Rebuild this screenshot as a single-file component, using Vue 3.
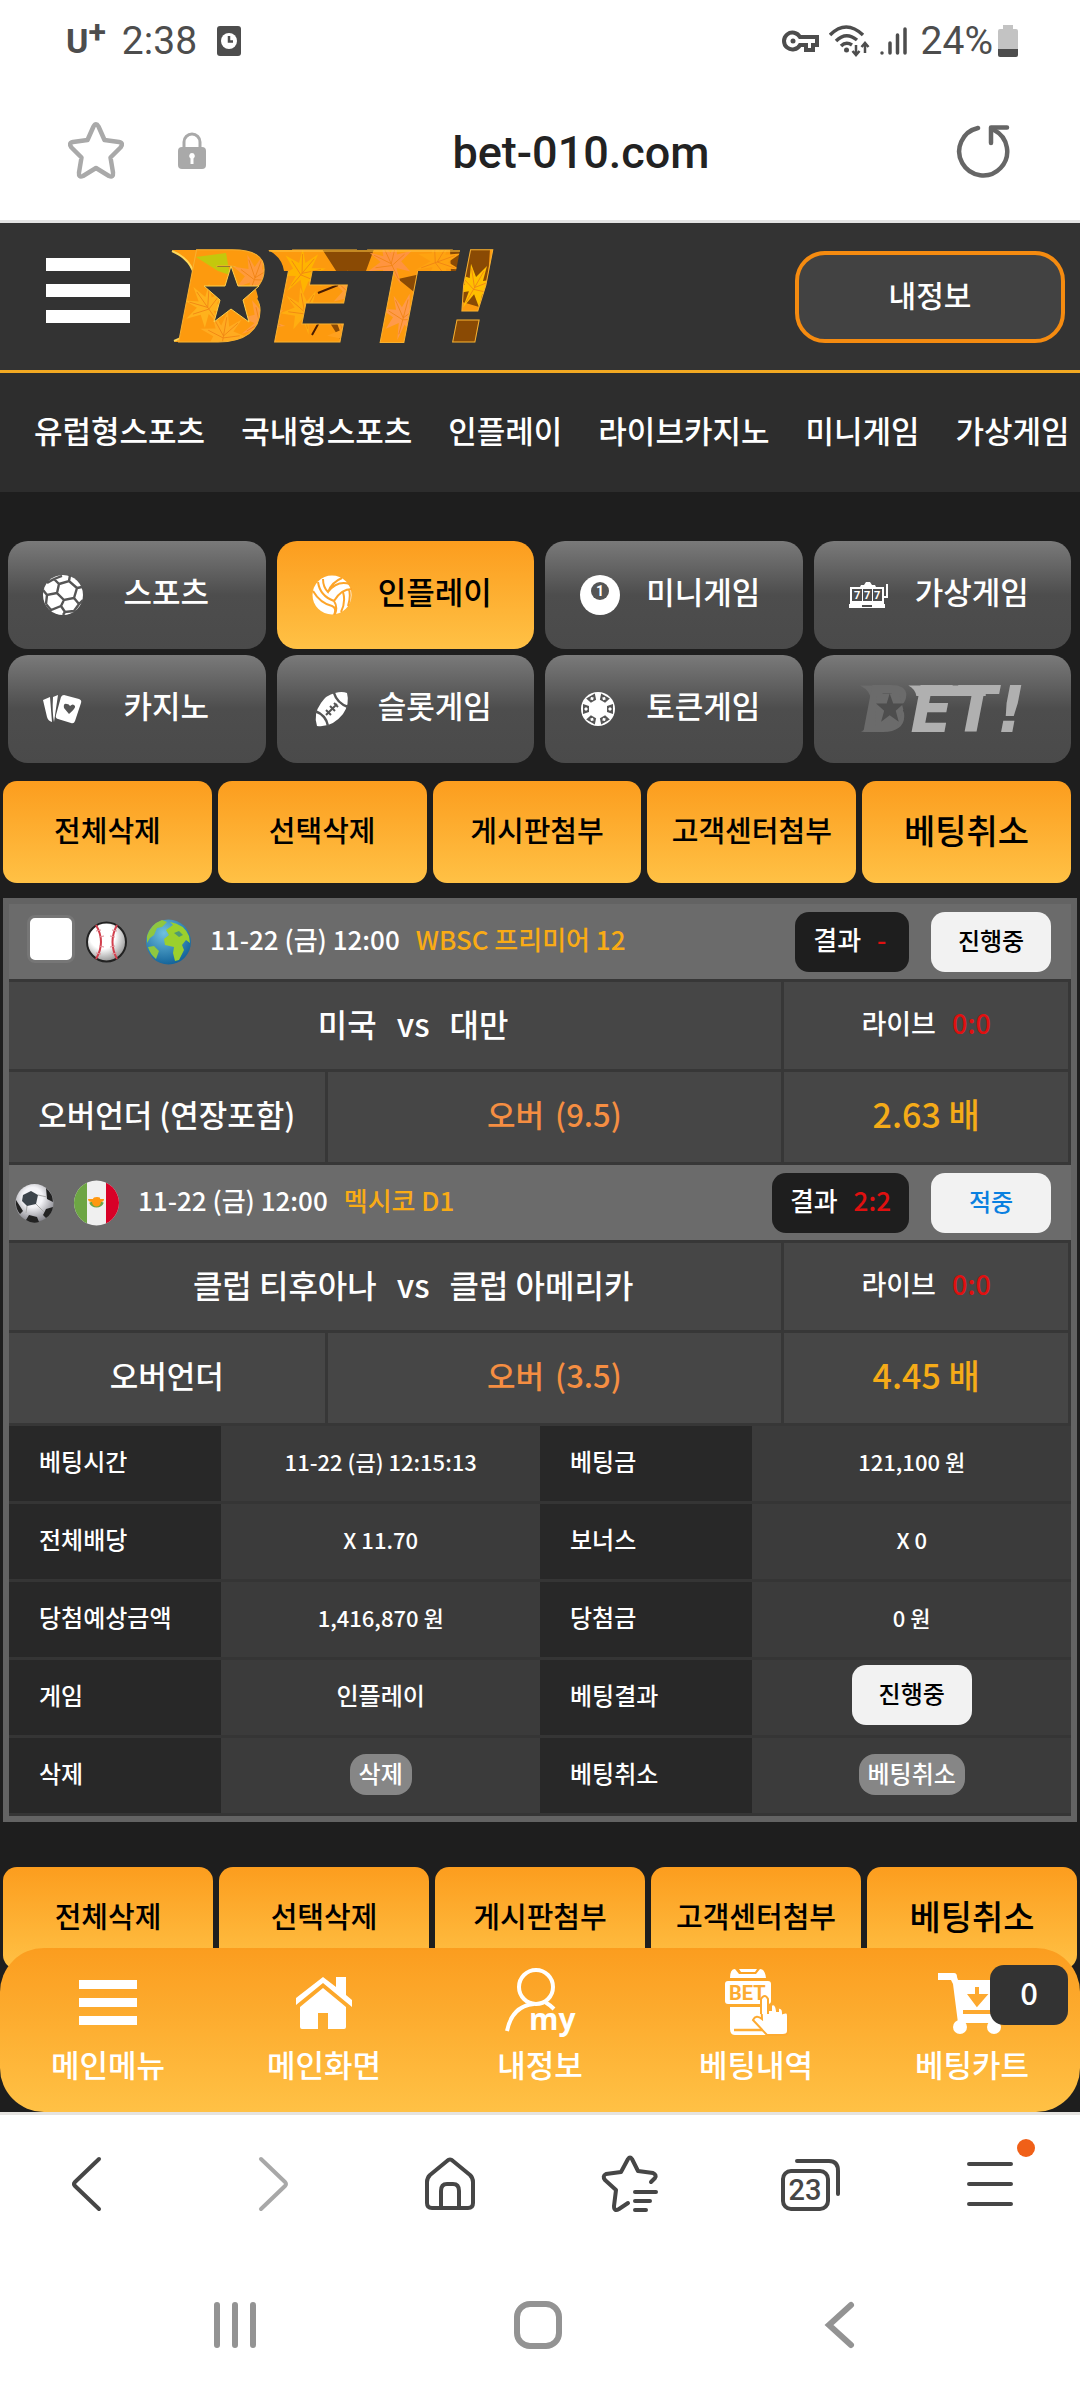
<template>
  <div class="screen">
    <div class="status-bar">
      <span class="carrier">U<sup>+</sup></span>
      <span class="clock">2:38</span>
      <svg class="status-alarm" width="24" height="30" viewBox="0 0 24 30">
        <rect width="24" height="30" rx="3" fill="#4d4d4d" />
        <circle cx="12" cy="15" r="8" fill="#fff" />
        <path d="M12 10v5.500h4" fill="none" stroke="#4d4d4d" stroke-width="2.500" />
      </svg>
      <div class="status-right">
        <svg width="38" height="24" viewBox="0 0 38 24" fill="none" stroke="#4d4d4d" stroke-width="4">
          <path d="M18 8A8.500 8.500 0 1 0 18 16H24V21H31V16H35V8Z" />
          <circle cx="11" cy="12" r="2.500" fill="#4d4d4d" stroke="none" />
        </svg>
        <svg width="42" height="32" viewBox="0 0 42 32" fill="none" stroke="#4d4d4d" stroke-width="3.500">
          <path d="M1 10Q17-6 34 10M7 16Q17 6 28 15M12 21Q17 16 23 20" />
          <circle cx="17.500" cy="25" r="2.500" fill="#4d4d4d" stroke="none" />
          <path d="M27 20v10M23.500 26l3.500 4 3.500-4M36 28V18M32.500 22l3.500-4 3.500 4" stroke-width="2.500" />
        </svg>
        <svg width="28" height="30" viewBox="0 0 28 30" stroke="#4d4d4d" stroke-width="3.500" stroke-linecap="round">
          <path d="M2 27v0M10 27V17M17.500 27V9M25 27V3" />
        </svg>
        <span class="percent">24%</span>
        <svg class="battery" width="20" height="32" viewBox="0 0 20 32">
          <path d="M5 0h10v4h3q2 0 2 2v19H0V6q0-2 2-2h3z" fill="#c3c3c3" />
          <path d="M0 24h20v6q0 2-2 2H2q-2 0-2-2z" fill="#4d4d4d" />
        </svg>
      </div>
    </div>

    <div class="url-bar">
      <button class="plain" aria-label="북마크">
        <svg width="60" height="58" viewBox="0 0 60 58" fill="none" stroke="#a9a9a9" stroke-width="4.500" stroke-linejoin="round">
          <path d="M27.500 4.500Q30 0 32.500 4.500L38.500 18L53 20Q58 21 54.500 25.500L44.500 35.500L47 50.500Q47.500 56 43 54L30 46L17 54Q12.500 56 13 50.500L15.500 35.500L5.500 25.500Q2 21 7 20L21.500 18Z" />
        </svg>
      </button>
      <svg class="lock" width="28" height="38" viewBox="0 0 28 38">
        <path d="M6 16V10a8 8 0 0 1 16 0v6" fill="none" stroke="#a9a9a9" stroke-width="3" />
        <rect y="15" width="28" height="22" rx="4" fill="#a9a9a9" />
        <path d="M14 21a3 3 0 0 1 1.500 5.500V32h-3v-5.500A3 3 0 0 1 14 21" fill="#fff" />
      </svg>
      <span class="address">bet-010.com</span>
      <button class="plain" aria-label="새로고침">
        <svg width="56" height="56" viewBox="0 0 56 56" fill="none" stroke="#666" stroke-width="4.500" stroke-linecap="round">
          <path d="M22 5A24 24 0 1 0 38 7" />
          <path d="M35 20V4.500H51" stroke-linejoin="round" />
        </svg>
      </button>
    </div>

    <div class="site">
      <header class="site-header">
        <button class="plain burger" aria-label="메뉴"><i></i><i></i><i></i></button>
        <a href="#" class="logo" aria-label="BET!">
          <svg viewBox="0 -4 330 96">
            <defs>
              <pattern id="leaves" y="-4" width="340" height="100" patternUnits="userSpaceOnUse">
                <rect width="340" height="100" fill="#fd9a0e" />
                <path d="M150 0h52l-8 22-26 6zM226 30l36-8-4 34zM278 0h40l-4 60-34-10zM268 68h50v32h-50zM158 74l34-8v20l-24 4z" fill="#8a4a04" />
                <path d="M24 8l30-4 4 22-12-4z" fill="#c4c80c" />
                <g v-for="leaf in leaves" :key="leaf.id" :transform="leaf.at">
                  <path
                    d="M0-22L4-7L15-16L9-3L24 0L10 5L14 18L3 9L0 26L-3 9L-14 18L-10 5L-24 0L-9-3L-15-16L-4-7Z"
                    :fill="leaf.color"
                  />
                  <path d="M0-16V20M-12-12L0 3L12-12M-16 0L0 5L16 0" fill="none" stroke="#f08312" stroke-width=".8" />
                </g>
                <path d="M80 88l14-12M140 86l10-18M146 44l20-8M178 40l22-3" stroke="#4a1c00" stroke-width="2" />
              </pattern>
            </defs>
            <path d="M0-3H34V89H2Q22 80 22 62V28Q22 8 0-3Z" fill="url(#leaves)" />
            <path d="M0-2Q23 8 23 30V60Q23 80 2 88" fill="none" stroke="#ffd85a" stroke-width="2" />
            <text class="wordmark" x="4" y="89" fill="url(#leaves)" stroke="#f8b030">BET!</text>
            <path d="M34 14H78L86 44L74 76H30Z" fill="url(#leaves)" />
            <path d="M96-3H288L284 18H112Q110 4 96-3Z" fill="url(#leaves)" />
            <path d="M97-2H288" stroke="#ffc843" />
            <path d="M59 13L66 33H87L71 47L77 69L59 56L42 69L48 47L32 33H53Z" fill="#333" stroke="#ffd04a" />
          </svg>
        </a>
        <button class="my-info">내정보</button>
      </header>

      <nav class="top-nav">
        <a v-for="item in topNav" :key="item" href="#">{{ item }}</a>
      </nav>

      <main>
        <div class="game-grid">
          <a
            v-for="game in games"
            :key="game.id"
            href="#"
            class="game"
            :class="{ active: game.active }"
          >
            <svg v-if="game.id === 'soccer'" class="game-icon" viewBox="0 0 40 40">
              <circle cx="20" cy="20" r="20" fill="#fff" />
              <path
                d="M16 9L26 6L34 13L31 23L21 25L14 18ZM16 9L11 4M26 6L27 0M34 13L39 12M31 23L36 29M21 25L18 31M14 18L4 20L0 15M4 20L3 29M18 31L8 35L3 29M18 31L22 37L31 36L36 29L40 25M22 37L20 40M11 4L4 8M11 4L19 1"
                fill="none" stroke="#555" stroke-width="2.400"
              />
            </svg>
            <svg v-else-if="game.id === 'volley'" class="game-icon" viewBox="0 0 40 40">
              <circle cx="20" cy="20" r="19.500" fill="#fff" />
              <path
                d="M6 7Q8 21 22 26Q29 14 40 14M1 16Q8 28 20 31Q25 33 22 40M22 26Q26 32 23 39M16 17Q25 5 38 9M11 4Q11 12 16 17Q20 7 30 3M31 17Q34 27 29 37M37 14Q39 22 36 31"
                fill="none" stroke="#fda52a" stroke-width="2"
              />
            </svg>
            <svg v-else-if="game.id === 'mini'" class="game-icon" viewBox="0 0 40 40">
              <circle cx="20" cy="20" r="20" fill="#fff" />
              <circle cx="20" cy="16" r="9" fill="#555" />
              <text x="20" y="21" class="ball-no" text-anchor="middle">1</text>
            </svg>
            <svg v-else-if="game.id === 'virtual'" class="game-icon" viewBox="0 0 40 40">
              <path d="M12 10h3l2-3h4l2 3h3l1 2h8v17h1v4H0v-4h1V12h10z" fill="#fff" />
              <path d="M3 14h10v12H3zM14 14h9v12h-9zM24 14h9v12h-9zM13 30h10v2H13z" fill="#4d4d4d" />
              <path d="M38 9v13h-3" fill="none" stroke="#fff" stroke-width="2" />
              <text x="5" y="24" class="slot-no">7</text>
              <text x="15" y="24" class="slot-no">7</text>
              <text x="25" y="24" class="slot-no">7</text>
            </svg>
            <svg v-else-if="game.id === 'casino'" class="game-icon" viewBox="0 0 40 40">
              <path d="M0 11L7 8L9 33Q5 32 4 28ZM10 8L15 6L11 33Q9 24 10 8Z" fill="#fff" />
              <path d="M21 6L36 10Q39 11 38 14L32 32Q31 35 28 34L15 30Q12 29 13 26L18 8Q19 6 21 6Z" fill="#fff" />
              <path d="M26 25L21 19Q20 14 24 15Q26 15 27 17Q30 14 32 17Q33 19 26 25Z" fill="#555" />
            </svg>
            <svg v-else-if="game.id === 'slot'" class="game-icon" viewBox="0 0 40 40">
              <path d="M23 4Q30 2 35 4Q38 15 31 25Q20 39 5 37Q1 25 9 14Q14 6 23 4Z" fill="#fff" />
              <path d="M22 4Q25 14 36 18M3 22Q14 26 16 37" fill="none" stroke="#555" stroke-width="2.500" />
              <path d="M14 26L25 15M14 21l5 5M18 17l5 5M22 14l4 4" stroke="#555" stroke-width="2" />
            </svg>
            <svg v-else-if="game.id === 'token'" class="game-icon" viewBox="0 0 40 40">
              <circle cx="18" cy="20" r="17" fill="#fff" />
              <g v-for="n in 6" :key="n" :transform="`rotate(${n * 60 - 30} 18 20)`">
                <path d="M13 5h10l-2 6h-6z" fill="#555" />
                <path d="M16 8l2-2 2 2-2 2z" fill="#fff" />
              </g>
            </svg>
            <svg v-else class="gray-logo" viewBox="0 -4 330 96">
              <path d="M0-3H34V89H2Q22 80 22 62V28Q22 8 0-3Z" fill="#6b6b6b" />
              <text class="wordmark" x="4" y="89" fill="#6b6b6b">B<tspan fill="#b0b0b0">ET!</tspan></text>
              <path d="M34 14H78L86 44L74 76H30Z" fill="#6b6b6b" />
              <path d="M96-3H250V18H112Q110 4 96-3Z" fill="#b0b0b0" />
              <path d="M59 13L66 33H87L71 47L77 69L59 56L42 69L48 47L32 33H53Z" fill="#4d4d4d" />
            </svg>
            <span v-if="game.label">{{ game.label }}</span>
          </a>
        </div>

        <div class="actions">
          <button v-for="action in actions" :key="action">{{ action }}</button>
        </div>

        <section class="bet">
          <template v-for="match in matches" :key="match.league">
            <div class="match-head">
              <input v-if="match.checkable" type="checkbox" aria-label="선택" />
              <svg v-if="match.sport === 'baseball'" width="41" height="42" viewBox="0 0 41 42">
                <defs>
                  <radialGradient id="baseball" cx=".4" cy=".35" r=".65">
                    <stop offset=".5" stop-color="#fff" />
                    <stop offset="1" stop-color="#999" />
                  </radialGradient>
                </defs>
                <circle cx="20.500" cy="21" r="19.500" fill="url(#baseball)" stroke="#222" stroke-width="2" />
                <path d="M10 4Q20 21 10 38M31 4Q22 21 31 38" fill="none" stroke="#d2404e" stroke-width="2" />
                <path d="M10 10l5-1M13 16l5-1M13 25l5 1M10 32l5 1M26 9l5 1M24 15l5 1M24 26l5-1M26 33l5-1" stroke="#e09098" />
              </svg>
              <svg v-else width="41" height="42" viewBox="0 0 41 42">
                <defs>
                  <radialGradient id="soccer" cx=".45" cy=".35" r=".65">
                    <stop offset=".4" stop-color="#f4f4f8" />
                    <stop offset="1" stop-color="#85858c" />
                  </radialGradient>
                </defs>
                <circle cx="20.500" cy="21" r="19" fill="url(#soccer)" />
                <path d="M9 13L17 9L24 13L22 22L13 24L8 19Z" fill="#3c444c" />
                <path d="M32 6Q39 12 39 20L33 17ZM2 18Q1 26 6 32L9 29ZM12 38L15 33L23 35L25 40Q18 42 12 38ZM32 27L39 25Q38 32 32 36L29 33Z" fill="#222" />
                <path d="M24 13L33 15M22 22L30 30M13 24L12 31" stroke="#aaa" />
              </svg>
              <svg v-if="match.region === 'world'" width="45" height="46" viewBox="0 0 45 46">
                <defs>
                  <radialGradient id="sea" cx=".4" cy=".3" r=".7">
                    <stop offset="0" stop-color="#6fc1e0" />
                    <stop offset="1" stop-color="#15659b" />
                  </radialGradient>
                </defs>
                <circle cx="22.500" cy="23" r="22.500" fill="url(#sea)" />
                <path d="M1 17Q5 5 16 1L21 3L16 8L11 9L8 16L4 19L1 24ZM2 28L8 27L13 32L10 40Q4 35 2 28Z" fill="#8fc740" />
                <path d="M20 11L27 6L24 3Q38 5 43 17L44 24L40 21L36 26L38 31L33 41L29 42L27 34L28 28L19 26L18 20L23 16Z" fill="#9bd02d" />
                <path d="M28 14l5-2 4 4-4 2z" fill="#4f9a72" />
              </svg>
              <svg v-else width="45" height="46" viewBox="0 0 45 46">
                <clipPath id="flag"><circle cx="22.500" cy="23" r="22.500" /></clipPath>
                <g clip-path="url(#flag)">
                  <rect width="45" height="46" fill="#f0f0f0" />
                  <rect width="13" height="46" fill="#6da544" />
                  <rect x="32" width="13" height="46" fill="#d80027" />
                </g>
                <path d="M17 22a6 6 0 0 0 11 0" fill="none" stroke="#6da544" stroke-width="4" />
                <path d="M14 19h5q0-2 4-2t3 2h4q0 3-3 3a4 4 0 0 1-9 0q-4 0-4-3z" fill="#ff9811" />
              </svg>
              <span class="kickoff">{{ match.time }}</span>
              <span class="league">{{ match.league }}</span>
              <span class="result">결과 <b>{{ match.result }}</b></span>
              <span class="state" :class="{ hit: match.hit }">{{ match.state }}</span>
            </div>
            <table class="match">
              <colgroup>
                <col class="col-type" />
                <col class="col-pick" />
                <col class="col-odds" />
              </colgroup>
              <tbody>
                <tr>
                  <td colspan="2" class="teams">
                    {{ match.home }}<span class="vs">vs</span>{{ match.away }}
                  </td>
                  <td class="live">라이브 <b>0:0</b></td>
                </tr>
                <tr>
                  <td>{{ match.type }}</td>
                  <td class="pick">오버 <span>{{ match.line }}</span></td>
                  <td class="odds">{{ match.odds }} 배</td>
                </tr>
              </tbody>
            </table>
          </template>

          <table class="detail">
            <tbody>
              <tr v-for="row in details" :key="row[0]">
                <th scope="row">{{ row[0] }}</th>
                <td>
                  <button v-if="row[0] === '삭제'" class="pill">{{ row[1] }}</button>
                  <span v-else :class="{ num: /\d/.test(row[1]) }">{{ row[1] }}</span>
                </td>
                <th scope="row">{{ row[2] }}</th>
                <td>
                  <button v-if="row[2] === '베팅취소'" class="pill">{{ row[3] }}</button>
                  <span v-else-if="row[2] === '베팅결과'" class="state">{{ row[3] }}</span>
                  <span v-else class="num">{{ row[3] }}</span>
                </td>
              </tr>
            </tbody>
          </table>
        </section>

        <div class="actions actions-bottom">
          <button v-for="action in actions" :key="action">{{ action }}</button>
        </div>
      </main>

      <nav class="tab-bar">
        <a href="#">
          <svg width="58" height="70" viewBox="0 0 58 70" fill="#fff">
            <path d="M0 12h58v9H0zM0 30h58v9H0zM0 48h58v9H0z" />
          </svg>
          메인메뉴
        </a>
        <a href="#">
          <svg width="56" height="70" viewBox="0 0 56 70" fill="#fff">
            <path d="M0 30L27 9L40 19V9H50V27L56 32V39L27 15L0 37Z" />
            <path d="M27 20L50 39V59Q50 61 48 61H32V45H22V61H6Q4 61 4 59V39Z" />
          </svg>
          메인화면
        </a>
        <a href="#">
          <svg width="72" height="70" viewBox="0 0 72 70" fill="none" stroke="#fff" stroke-width="4">
            <circle cx="32" cy="19" r="17" />
            <path d="M3 63Q8 38 30 36M41 34Q46 37 50 41" />
            <text x="25" y="62" class="my-text">my</text>
          </svg>
          내정보
        </a>
        <a href="#">
          <svg width="66" height="70" viewBox="0 0 66 70">
            <path d="M7 10Q7 1 12 1L16 6H33L37 1Q42 1 43 10ZM16 1h18l-2 3H18z" fill="#fff" />
            <path d="M7 39h36v28H12q-5 0-5-6z" fill="#fff" />
            <path d="M11 62h28" stroke="#fdad34" stroke-width="2.500" />
            <path d="M38 29Q41 24 45 30V42H48V37Q53 34 54 43H55V40Q60 39 60 45Q65 43 65 48V63Q65 67 60 67H44L30 52Q33 46 39 51Z" fill="#fff" stroke="#fdaa30" stroke-width="2" />
            <rect x="2" y="13" width="46" height="23" rx="3" fill="#fff" />
            <text x="6" y="32" class="bet-text">BET</text>
            <path d="M38 46V31Q42 25 45 31V46" fill="#fff" stroke="#fdaa30" stroke-width="2" />
          </svg>
          베팅내역
        </a>
        <a href="#">
          <svg width="68" height="70" viewBox="0 0 68 70">
            <path d="M0 5H16Q19 5 19 9L20 12H66L58 53H62V55H20L15 16L13 12H0Z" fill="#fff" />
            <circle cx="22" cy="59" r="7" fill="#fff" />
            <circle cx="56" cy="59" r="7" fill="#fff" />
            <path d="M39 19v10M25 44h38M33 28h13l-7 8z" stroke="#fda92f" stroke-width="4" fill="#fda92f" />
            <path d="M30 59h18" stroke="#fdae37" stroke-width="3" />
          </svg>
          베팅카트
          <span class="cart-count">0</span>
        </a>
      </nav>
    </div>

    <div class="browser-nav">
      <button class="plain" aria-label="뒤로">
        <svg width="60" height="60" viewBox="0 0 60 60"><path d="M39 5L15 28Q13 30 15 32L39 55" /></svg>
      </button>
      <button class="plain dim" aria-label="앞으로">
        <svg width="60" height="60" viewBox="0 0 60 60"><path d="M21 5L45 28Q47 30 45 32L21 55" /></svg>
      </button>
      <button class="plain" aria-label="홈">
        <svg width="60" height="60" viewBox="0 0 60 60">
          <path d="M27 7Q30 4 33 7L50 21Q53 24 53 28V49Q53 54 48 54H12Q7 54 7 49V28Q7 24 10 21Z" />
          <path d="M21 54V37Q21 30 27 30H33Q39 30 39 37V54" />
        </svg>
      </button>
      <button class="plain" aria-label="북마크 목록">
        <svg width="60" height="60" viewBox="0 0 60 60">
          <path d="M51 28L55 24Q57 21 53 19L38 17L32 5Q30 2 28 5L21 18L6 20Q2 22 5 26L16 36L14 52Q14 58 19 55L28 49" />
          <path d="M35 38H56M35 47H50M35 56H46" />
        </svg>
      </button>
      <button class="plain" aria-label="탭">
        <svg width="60" height="60" viewBox="0 0 60 60">
          <path d="M17 7H49Q58 7 58 17V40" />
          <rect x="3" y="17" width="45" height="38" rx="8" />
          <text x="25" y="46" class="tab-no" text-anchor="middle">23</text>
        </svg>
      </button>
      <button class="plain more" aria-label="더보기">
        <svg width="60" height="60" viewBox="0 0 60 60"><path d="M9 10H51M9 30H51M9 50H51" /></svg>
        <i class="dot"></i>
      </button>
    </div>

    <div class="system-nav">
      <button class="plain" aria-label="최근 앱">
        <svg width="50" height="50" viewBox="0 0 50 50"><path d="M7 5V45M25 5V45M43 5V45" /></svg>
      </button>
      <button class="plain" aria-label="홈 화면">
        <svg width="50" height="50" viewBox="0 0 50 50"><rect x="4" y="4" width="42" height="42" rx="13" /></svg>
      </button>
      <button class="plain" aria-label="이전">
        <svg width="50" height="50" viewBox="0 0 50 50"><path d="M35 5L13 25L35 45" /></svg>
      </button>
    </div>
  </div>
</template>

<script setup>
const topNav = ['유럽형스포츠', '국내형스포츠', '인플레이', '라이브카지노', '미니게임', '가상게임']

const games = [
  { id: 'soccer', label: '스포츠' },
  { id: 'volley', label: '인플레이', active: true },
  { id: 'mini', label: '미니게임' },
  { id: 'virtual', label: '가상게임' },
  { id: 'casino', label: '카지노' },
  { id: 'slot', label: '슬롯게임' },
  { id: 'token', label: '토큰게임' },
  { id: 'brand' }
]

const actions = ['전체삭제', '선택삭제', '게시판첨부', '고객센터첨부', '베팅취소']

const matches = [
  {
    checkable: true,
    sport: 'baseball',
    region: 'world',
    time: '11-22 (금) 12:00',
    league: 'WBSC 프리미어 12',
    result: '-',
    state: '진행중',
    home: '미국',
    away: '대만',
    type: '오버언더 (연장포함)',
    line: '(9.5)',
    odds: '2.63'
  },
  {
    sport: 'soccer',
    region: 'mexico',
    time: '11-22 (금) 12:00',
    league: '멕시코 D1',
    result: '2:2',
    state: '적중',
    hit: true,
    home: '클럽 티후아나',
    away: '클럽 아메리카',
    type: '오버언더',
    line: '(3.5)',
    odds: '4.45'
  }
]

const details = [
  ['베팅시간', '11-22 (금) 12:15:13', '베팅금', '121,100 원'],
  ['전체배당', 'X 11.70', '보너스', 'X 0'],
  ['당첨예상금액', '1,416,870 원', '당첨금', '0 원'],
  ['게임', '인플레이', '베팅결과', '진행중'],
  ['삭제', '삭제', '베팅취소', '베팅취소']
]

const leaves = [
  { id: 1, at: 'translate(84 26) rotate(20)', color: '#ff9a3c' },
  { id: 2, at: 'translate(34 56) rotate(-35)', color: '#ffb21c' },
  { id: 3, at: 'translate(92 72) rotate(60)', color: '#ff9c40' },
  { id: 4, at: 'translate(52 84) rotate(10)', color: '#ffab20' },
  { id: 5, at: 'translate(132 22) rotate(40)', color: '#ffb400' },
  { id: 6, at: 'translate(132 60) rotate(-10)', color: '#ffae10' },
  { id: 7, at: 'translate(182 42) rotate(25)', color: '#ff9f38' },
  { id: 8, at: 'translate(178 86) rotate(50)', color: '#ffa01e' },
  { id: 9, at: 'translate(218 12) rotate(-25)', color: '#ff9440' },
  { id: 10, at: 'translate(232 66) rotate(15)', color: '#ff9a4a' },
  { id: 11, at: 'translate(268 12) rotate(70)', color: '#ffa310' },
  { id: 12, at: 'translate(304 36) rotate(30)', color: '#ffbf00' }
]
</script>

<style>
body {
  margin: 0;
  background: #fff;
}
</style>

<style scoped>
.screen {
  font-family: "Noto Sans CJK KR", "Noto Sans", sans-serif;
  font-weight: 500;
  background: #fff;
  color: #fff;
}

a {
  color: inherit;
  text-decoration: none;
}

button {
  font: inherit;
  color: inherit;
  border: 0;
  margin: 0;
  padding: 0;
  cursor: pointer;
}

.plain {
  display: flex;
  align-items: center;
  justify-content: center;
  background: none;
}

svg {
  display: block;
  flex: none;
}

/* phone status bar */
.status-bar {
  display: flex;
  align-items: center;
  height: 82px;
  padding: 0 62px 0 66px;
  font-family: Roboto, sans-serif;
  font-weight: 400;
  font-size: 39px;
  color: #4d4d4d;
}

.carrier {
  font-size: 34px;
  font-weight: 700;
  line-height: 40px;
}

.carrier sup {
  font-size: 32px;
  line-height: 0;
  vertical-align: 10px;
}

.clock {
  margin-left: 16px;
}

.status-alarm {
  margin-left: 20px;
}

.status-right {
  display: flex;
  align-items: center;
  gap: 9px;
  margin-left: auto;
}

.percent {
  margin-left: 4px;
}

.battery {
  margin-left: -4px;
}

.url-bar {
  display: flex;
  align-items: center;
  height: 138px;
  padding: 0 68px 0 66px;
  border-bottom: 3px solid #e3e3e3;
}

.lock {
  margin-left: 52px;
}

.address {
  flex: 1;
  padding-top: 3px;
  text-align: center;
  font-family: Roboto, sans-serif;
  font-size: 45px;
  font-weight: 500;
  color: #222;
}

/* site */
.site {
  background: #1e1e1e;
}

.site-header {
  display: flex;
  align-items: center;
  height: 147px;
  padding: 0 15px 0 46px;
  background: #333;
  border-bottom: 3px solid #f2a922;
}

.burger {
  flex-direction: column;
  gap: 13px;
  margin-bottom: 12px;
}

.burger i {
  width: 84px;
  height: 13px;
  background: #fff;
}

.logo {
  width: 330px;
  margin-left: 42px;
}

.wordmark {
  font-family: "DejaVu Sans", sans-serif;
  font-size: 126px;
  font-weight: 700;
  font-style: italic;
}

.logo svg,
.gray-logo {
  overflow: visible;
}

.my-info {
  width: 270px;
  height: 92px;
  margin-left: auto;
  padding-bottom: 6px;
  border: 4px solid #f58b10;
  border-radius: 30px;
  background: #424242;
  font-size: 30px;
}

.top-nav {
  display: flex;
  gap: 36px;
  height: 119px;
  padding-left: 34px;
  overflow: hidden;
  background: #2d2d2d;
  font-size: 31px;
  line-height: 114px;
  white-space: nowrap;
}

.game-grid {
  display: grid;
  grid-template-columns: repeat(4, 1fr);
  gap: 6px 11px;
  padding: 49px 9px 0 8px;
}

.game {
  display: flex;
  align-items: center;
  height: 108px;
  padding: 0 16px 0 35px;
  box-sizing: border-box;
  border-radius: 20px;
  background: linear-gradient(#7a7a7a, #4d4d4d 50%, #4a4a4a);
  font-size: 31px;
  line-height: 44px;
}

.game.active {
  background: linear-gradient(#fc9d1e, #ffc145);
  color: #000;
}

.game span {
  flex: 1;
  padding-bottom: 8px;
  text-align: center;
}

.game-icon {
  width: 40px;
  height: 40px;
}

.gray-logo {
  width: 166px;
  margin-left: 11px;
}

.ball-no {
  font: 700 14px Roboto, sans-serif;
  fill: #fff;
}

.slot-no {
  font: 700 11px Roboto, sans-serif;
  fill: #fff;
}

.actions {
  display: grid;
  grid-template-columns: repeat(5, 1fr);
  gap: 6px;
  padding: 18px 9px 15px 3px;
}

.actions button {
  height: 102px;
  padding-bottom: 6px;
  border-radius: 14px;
  background: linear-gradient(#fc9d1e, #ffc145);
  color: #000;
  font-size: 29px;
  white-space: nowrap;
}

.actions button:last-child {
  font-size: 34px;
}

.actions-bottom {
  padding: 45px 3px 0;
}

/* bet slip */
.bet {
  margin: 0 3px;
  border: 6px solid #636363;
  line-height: 40px;
}

.match-head {
  display: flex;
  align-items: center;
  height: 75px;
  padding: 0 20px 0 5px;
  background: #6b6b6b;
  border-bottom: 3px solid #373737;
  font-size: 26px;
  white-space: nowrap;
}

.match-head input {
  appearance: none;
  width: 48px;
  height: 48px;
  margin: 0 11px 6px 13px;
  border: 3px solid #767676;
  border-radius: 8px;
  background: #fff;
}

.match-head svg {
  margin-right: 19px;
}

.kickoff,
.league {
  padding-bottom: 6px;
}

.league {
  margin-left: 16px;
  color: #f9ab15;
}

.result {
  margin-left: auto;
  padding: 7px 18px 13px;
  border-radius: 14px;
  background: #1e1e1e;
}

b {
  display: inline-block;
  min-width: 14px;
  margin-left: 10px;
  font-weight: 500;
  color: #e01010;
}

.state {
  display: inline-block;
  box-sizing: border-box;
  width: 120px;
  height: 60px;
  border-radius: 14px;
  background: #f2f2f2;
  color: #000;
  font-size: 24px;
  line-height: 56px;
  text-align: center;
  vertical-align: middle;
}

.match-head .state {
  margin-left: 22px;
}

.state.hit {
  color: #0a80e0;
}

table {
  width: 100%;
  table-layout: fixed;
  border-spacing: 0;
}

.col-type {
  width: 30%;
}

.col-pick {
  width: 43%;
}

.col-odds {
  width: 27%;
}

.match td {
  box-sizing: border-box;
  height: 93px;
  padding: 0 0 6px;
  background: #464646;
  border-right: 3px solid #373737;
  border-bottom: 3px solid #373737;
  font-size: 31px;
  text-align: center;
}

.match tr:first-child td {
  height: 90px;
}

.match .teams {
  padding-left: 36px;
  font-size: 32px;
}

.vs {
  margin: 0 20px;
}

.match .live {
  font-size: 27px;
}

.match .pick {
  color: #f58e42;
}

.pick span {
  margin-left: 4px;
}

.match .odds {
  color: #f5ab18;
  font-size: 34px;
}

.detail th,
.detail td {
  box-sizing: border-box;
  height: 78px;
  padding: 0 0 5px;
  border-bottom: 3px solid #353535;
  font-size: 24px;
  font-weight: 500;
}

.detail th {
  width: 20%;
  padding-left: 30px;
  background: #282828;
  text-align: left;
}

.detail td {
  width: 30%;
  background: #3b3b3b;
  text-align: center;
}

.num {
  font-size: 22px;
}

.pill {
  height: 41px;
  padding: 0 9px 3px;
  border-radius: 16px;
  background: #868686;
  line-height: 38px;
  vertical-align: middle;
}

/* bottom tab bar overlaps the last row of actions */
.tab-bar {
  position: relative;
  display: grid;
  grid-template-columns: repeat(5, 1fr);
  margin-top: -21px;
  height: 164px;
  border-radius: 44px;
  background: linear-gradient(#fb9d1f, #ffc145);
}

.tab-bar a {
  position: relative;
  display: flex;
  flex-direction: column;
  align-items: center;
  gap: 4px;
  padding-top: 20px;
  font-size: 31px;
  line-height: 44px;
}

.my-text {
  font: 700 30px "Open Sans", sans-serif;
  fill: #fff;
  stroke: none;
}

.bet-text {
  font: 700 20px Roboto, sans-serif;
  fill: #fcab33;
}

.cart-count {
  position: absolute;
  top: 17px;
  right: 12px;
  width: 78px;
  border-radius: 14px;
  background: #333;
  line-height: 54px;
  height: 60px;
  text-align: center;
}

/* browser and system buttons */
.browser-nav {
  display: grid;
  grid-template-columns: repeat(6, 1fr);
  height: 138px;
  border-top: 3px solid #e5e3e0;
}

.browser-nav svg {
  fill: none;
  stroke: #464646;
  stroke-width: 4px;
  stroke-linecap: round;
  stroke-linejoin: round;
}

.browser-nav .dim svg {
  stroke: #a8a8a8;
}

.tab-no {
  font: 500 29px Roboto, sans-serif;
  fill: #464646;
  stroke: none;
}

.more {
  position: relative;
}

.dot {
  position: absolute;
  top: 24px;
  right: 45px;
  width: 18px;
  height: 18px;
  border-radius: 50%;
  background: #f06018;
}

.system-nav {
  display: grid;
  grid-template-columns: repeat(3, 1fr);
  height: 143px;
  padding: 0 88px 0 84px;
}

.system-nav svg {
  fill: none;
  stroke: #939393;
  stroke-width: 6px;
  stroke-linecap: round;
}
</style>
